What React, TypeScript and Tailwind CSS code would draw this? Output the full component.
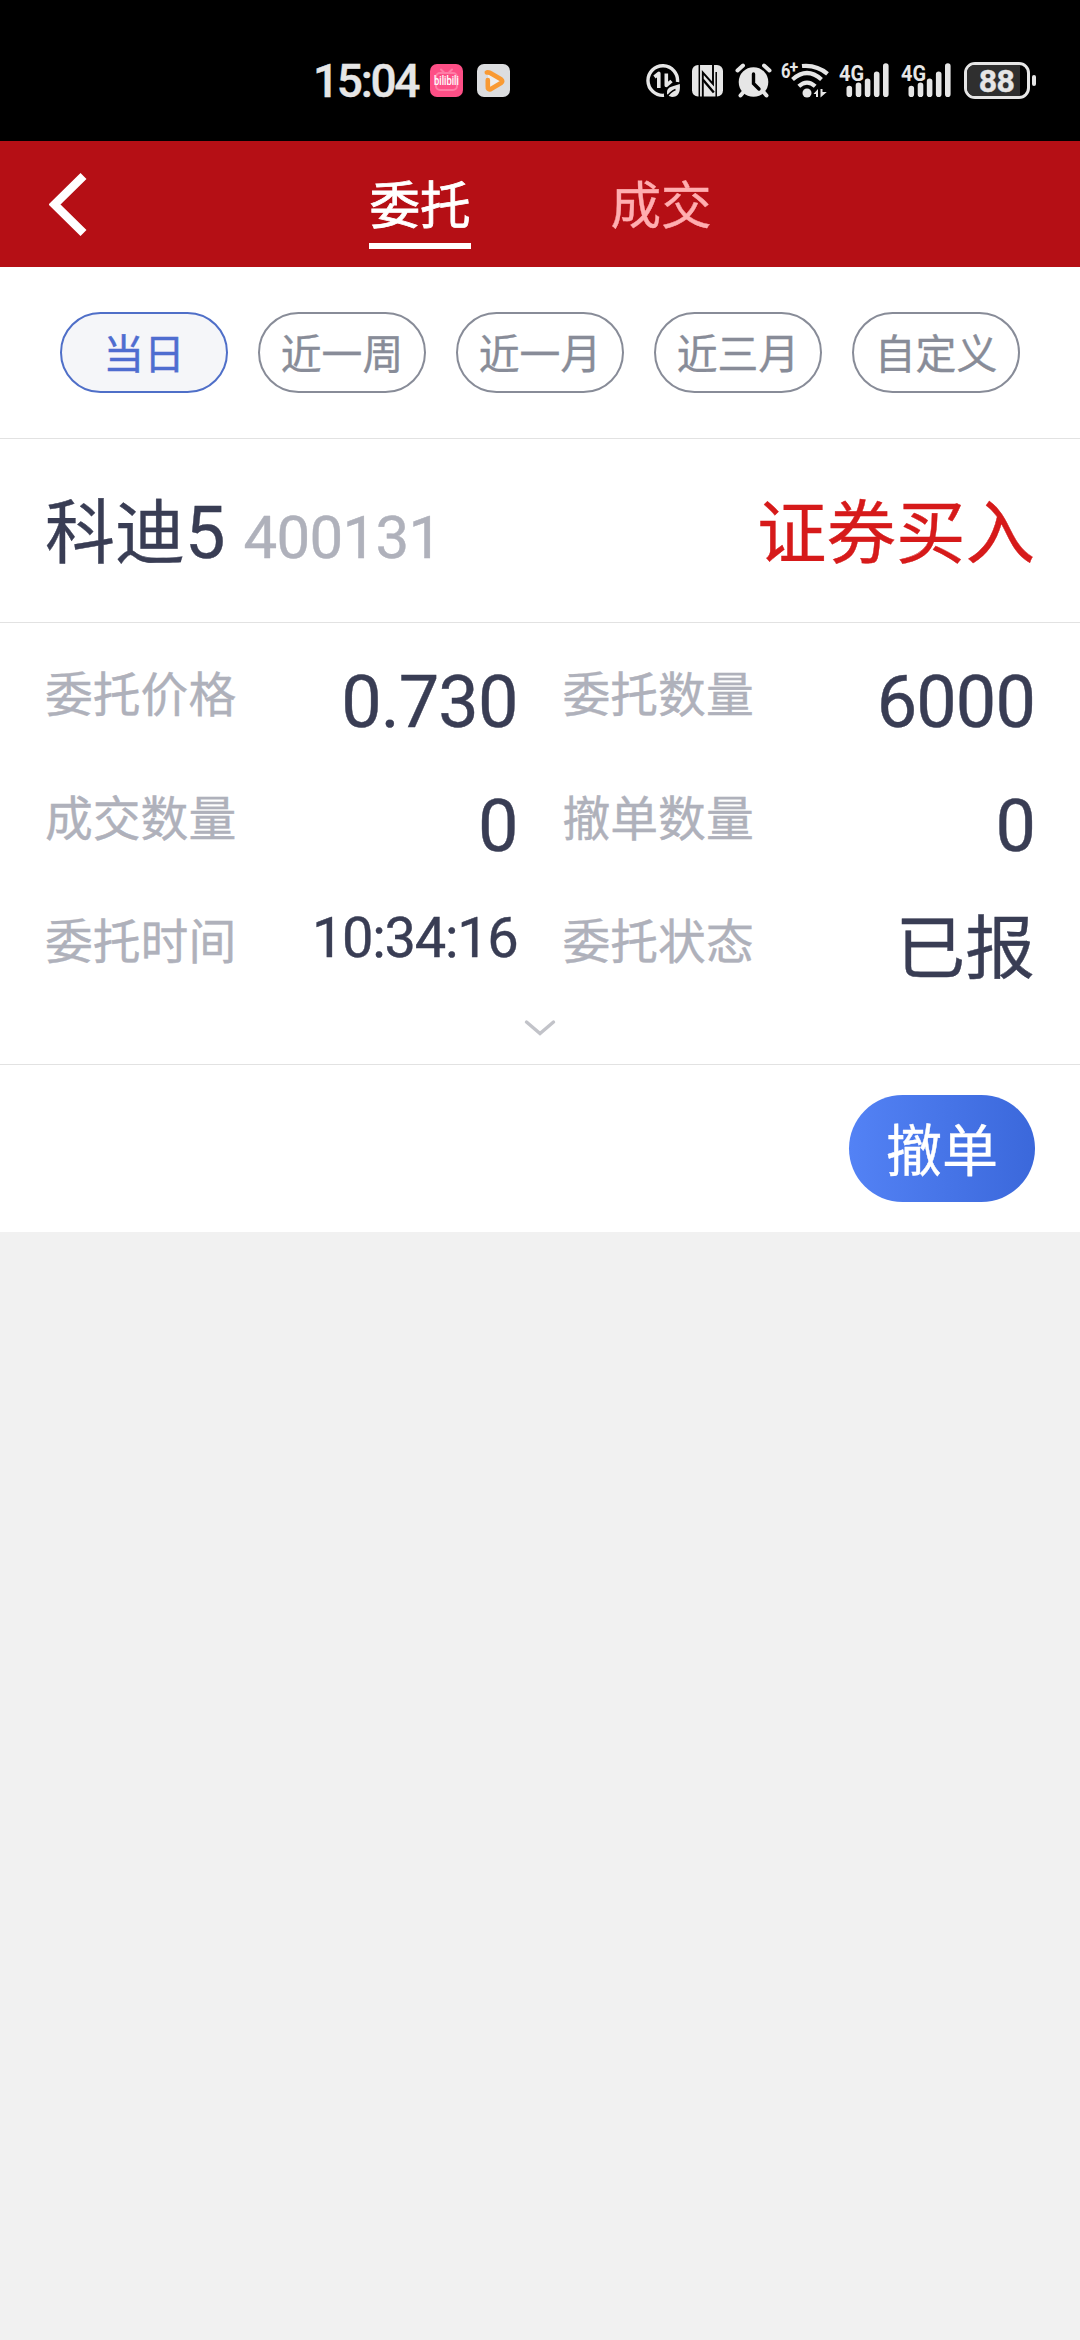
import React from 'react'

const periods = ['当日', '近一周', '近一月', '近三月', '自定义']

const SignalIcon: React.FC = () => (
  <svg className="-mt-[6px]" width="51" height="42" viewBox="0 -6 51 42" fill="#e6e6e6">
    <text x="0" y="18.5" fontFamily="Roboto, sans-serif" fontSize="22.5" fontWeight="700" textLength="25" lengthAdjust="spacingAndGlyphs">
      4G
    </text>
    <path
      d="M10.3 26.6v5.6M19.5 23.2v9M28.6 19.2v13M37.7 12.2v20M46.8 4v28.2"
      stroke="#e6e6e6"
      strokeWidth="5.6"
      strokeLinecap="round"
    />
  </svg>
)

const StatusBar: React.FC = () => (
  <div className="flex h-[141px] items-start bg-black pl-[313px] pt-[62px] font-[Roboto,sans-serif] text-[#e6e6e6]">
    <span className="w-[117px] text-[46px] font-medium leading-[38px] tracking-[-2.3px]">15:04</span>
    {/* running apps */}
    <svg className="mt-[2px]" width="33" height="33" viewBox="0 0 33 33">
      <rect width="33" height="33" rx="7" fill="#fd4f86" />
      <g fill="none" stroke="#ff7da6" strokeWidth="2" strokeLinecap="round">
        <rect x="6" y="9" width="21" height="17" rx="4" />
        <path d="M11 5.5l3 3M22 5.5l-3 3" />
      </g>
      <text x="4" y="15.3" transform="scale(1 1.4)" fontFamily="Roboto, sans-serif" fontSize="9.4" fontWeight="500" fill="#fff">
        bilibili
      </text>
    </svg>
    <svg className="ml-[14px] mt-[2px]" width="33" height="33" viewBox="0 0 33 33">
      <rect width="33" height="33" rx="7" fill="#dcdddf" />
      <path d="M11 10L25 17.3L11.5 25.5Z" fill="#eeeeee" />
      <path
        d="M9.8 8.5Q12 8 15 10L24 15.2Q26.5 17.3 24 19L13.5 25.2Q10.5 26 10.8 22.5V16"
        fill="none"
        stroke="#f99a33"
        strokeWidth="4.6"
        strokeLinecap="round"
        strokeLinejoin="round"
      />
    </svg>

    <div className="ml-[136px] flex items-start">
      {/* data saver */}
      <svg className="mt-[2px]" width="35" height="34" viewBox="0 0 35 34" fill="none" stroke="#e6e6e6">
        <path d="M18 31.3A14.8 14.8 0 1 1 31.5 18" strokeWidth="3.4" />
        <path d="M8.5 13L12.8 9.5V24M20.3 9.5V21.5L25.5 17" strokeWidth="3.6" strokeLinejoin="round" />
        <path d="M21 30Q20 24 26 22.5L33.8 20Q35 33 26 33Q23 33 21 30Z" fill="#e6e6e6" stroke="none" />
        <path d="M20 34Q24 28 29.5 25.5" stroke="#000" strokeWidth="1.5" />
      </svg>
      {/* nfc */}
      <svg className="ml-[11px] mt-[2px]" width="32" height="33" viewBox="0 0 32 33">
        <rect x="0" y="1" width="31" height="31.5" rx="6" fill="#e6e6e6" />
        <path d="M7.3 1V33M24.2 8V33" stroke="#000" strokeWidth="1.5" />
        <path d="M10.8 33V8.5L21 20V1" fill="none" stroke="#000" strokeWidth="1.9" />
        <path d="M10.8 15.5L21.8 28.5" fill="none" stroke="#000" strokeWidth="2.4" />
      </svg>
      {/* alarm */}
      <svg className="ml-[11px] mt-[1px]" width="37" height="35" viewBox="0 0 37 35" fill="none" strokeLinecap="round">
        <circle cx="18.5" cy="19" r="14.8" fill="#e6e6e6" />
        <path d="M2.5 7.5L8 2.5M34.5 7.5L29 2.5M8.5 29L5.5 32.5M28.5 29L31.5 32.5" stroke="#e6e6e6" strokeWidth="4" />
        <path d="M18.5 11V20.5L24 26" stroke="#000" strokeWidth="3.4" />
      </svg>
      {/* wifi 6+ */}
      <svg className="-mt-[6px] ml-[9px]" width="49" height="43" viewBox="0 -6 49 43" fill="#e6e6e6" fontFamily="Roboto, sans-serif" fontWeight="700">
        <text x="0" y="16" fontSize="21" textLength="9.5" lengthAdjust="spacingAndGlyphs">
          6
        </text>
        <text x="8.5" y="11" fontSize="16">
          +
        </text>
        <g fill="none" stroke="#e6e6e6" strokeWidth="4.2">
          <path d="M21 4Q35.5 2.5 46.5 11.8" />
          <path d="M11.5 17.5Q26 4.5 40.5 17.5" />
          <path d="M17.8 24.3Q26 17 34.2 24.3" />
        </g>
        <circle cx="26" cy="31" r="4.5" />
        <path d="M32.5 32L37 27V35H35V32ZM39.5 27H41.5V30H45.8L39.5 35.5Z" />
      </svg>
      <div className="ml-[9px] flex gap-[11px]">
        <SignalIcon />
        <SignalIcon />
      </div>
      {/* battery */}
      <div className="ml-[12px] flex items-center gap-[2px]">
        <div className="flex h-[37px] w-[66px] rounded-[11px] border-[3px] border-[#e6e6e6] bg-black">
          <div className="flex w-[53px] items-center justify-center rounded-l-[8px] bg-[#2f2f2f] pl-[6px] text-[32px] font-bold leading-none tracking-[-0.5px]">
            88
          </div>
        </div>
        <div className="h-[11px] w-[4px] rounded-full bg-[#e6e6e6]" />
      </div>
    </div>
  </div>
)

const NavBar: React.FC = () => (
  <div className="flex h-[126px] items-start bg-[#b50f15] text-[50.6px] leading-[50px]">
    <button className="ml-[49px] mt-[31px]">
      <svg width="40" height="64" viewBox="0 0 40 64" fill="none" stroke="#fff" strokeWidth="8.5">
        <path d="M34.5 4L5.5 32.5L34.5 61" />
      </svg>
    </button>
    <button className="ml-[280px] mt-[36px] h-[72px] w-[102px] whitespace-nowrap border-b-[6px] border-white pb-[16px] text-center text-white [-webkit-text-stroke:0.8px]">
      委托
    </button>
    <button className="ml-[139px] mt-[36px] w-[102px] whitespace-nowrap text-center text-[#ffaeb0]">成交</button>
  </div>
)

type FieldProps = { label: string; value: string; kind?: 'number' | 'time' | 'text' }

const valueStyles: Record<string, string> = {
  number: 'pt-[20px] font-[Roboto,sans-serif] text-[72px] leading-[68px] tracking-[-0.9px]',
  time: 'pt-[12px] font-[Roboto,sans-serif] text-[56px] leading-[60px] tracking-[-1.3px]',
  text: 'pt-[13px] text-[69.7px] leading-[68px]',
}

const Field: React.FC<FieldProps> = ({ label, value, kind = 'number' }) => (
  <div className="flex h-[123.5px] items-start justify-between">
    <span className="pt-[18px] text-[47.8px] leading-[50px] text-[#afb1bb]">{label}</span>
    <span className={`text-[#393d54] ${valueStyles[kind]}`}>{value}</span>
  </div>
)

export default function App() {
  return (
    <div className="flex min-h-[2340px] w-[1080px] flex-col bg-[#f1f1f1] font-['Noto_Sans_CJK_SC',sans-serif] [-webkit-text-stroke:0.4px]">
      <StatusBar />
      <NavBar />

      <div className="flex h-[172px] gap-[30px] border-b border-[#e2e2e2] bg-white px-[60px] pt-[45px]">
        {periods.map((p, i) => (
          <button
            key={p}
            className={`h-[81px] w-[168px] rounded-full border-2 pb-[1px] text-[40.8px] leading-[60px] ${
              i === 0 ? 'border-[#4f6fc8] bg-[#f5f6f9] text-[#4f6dd0]' : 'border-[#888c98] text-[#888c98]'
            }`}
          >
            {p}
          </button>
        ))}
      </div>

      <div className="flex h-[184px] items-baseline border-b border-[#e2e2e2] bg-white px-[45px] pt-[39px] leading-[100px]">
        <span className="text-[70px] text-[#393d54]">
          科迪<span className="font-[Roboto,sans-serif] text-[72px]">5</span>
        </span>
        <span className="ml-[18px] font-[Roboto,sans-serif] text-[60px] tracking-[-0.7px] text-[#afb1bb]">400131</span>
        <span className="ml-auto text-[69.5px] text-[#d61a1a]">证券买入</span>
      </div>

      <div className="h-[442px] border-b border-[#e2e2e2] bg-white px-[45px] pt-[26px]">
        <div className="grid grid-cols-2 gap-x-[45px]">
          <Field label="委托价格" value="0.730" />
          <Field label="委托数量" value="6000" />
          <Field label="成交数量" value="0" />
          <Field label="撤单数量" value="0" />
          <Field label="委托时间" value="10:34:16" kind="time" />
          <Field label="委托状态" value="已报" kind="text" />
        </div>
        <svg className="mx-auto -mt-[1px]" width="32" height="18" viewBox="0 0 32 18" fill="none" stroke="#c2c3c9" strokeWidth="3.4" strokeLinecap="round">
          <path d="M2.5 3L16 14.5L29.5 3" />
        </svg>
      </div>

      <div className="flex h-[167px] justify-end bg-white pr-[45px] pt-[30px]">
        <button className="h-[107px] w-[186px] rounded-full bg-linear-to-r from-[#5382f5] to-[#3b68db] pb-[3px] text-[56px] leading-[100px] text-white">
          撤单
        </button>
      </div>
    </div>
  )
}
